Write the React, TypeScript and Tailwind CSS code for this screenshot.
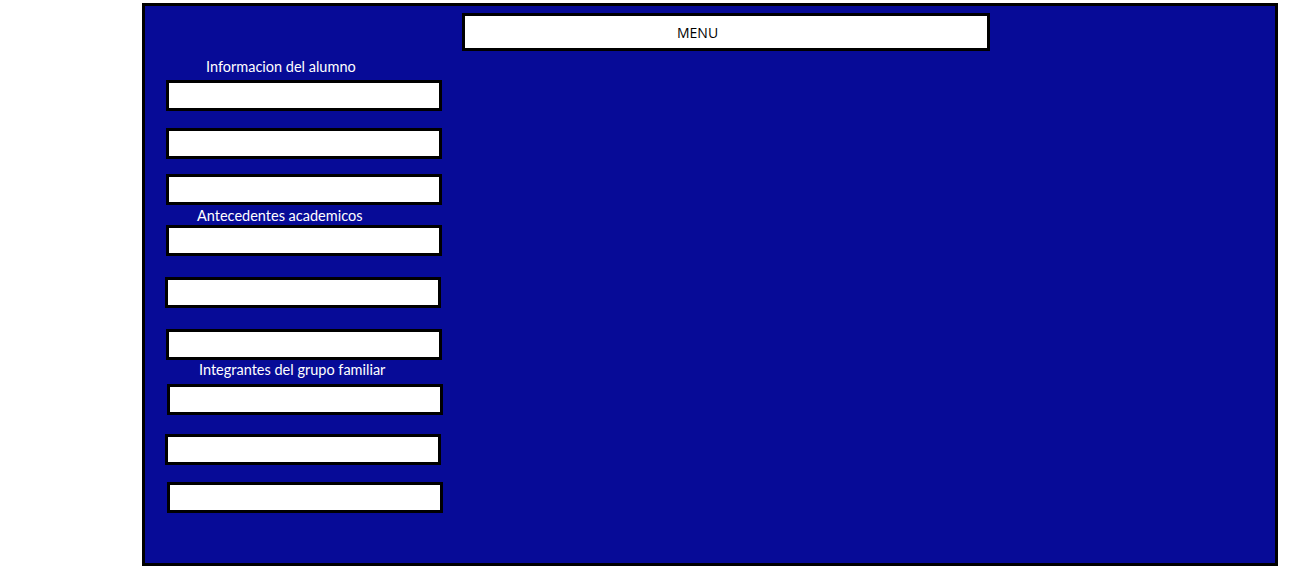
const fields: { label?: string; labelMl?: string; labelMt?: string; mt: string; ml: string }[] = [
	{ label: 'Informacion del alumno', labelMl: 'ml-[61px]', labelMt: 'mt-[8px]', mt: 'mt-[5px]', ml: 'ml-[21px]' },
	{ mt: 'mt-[17px]', ml: 'ml-[21px]' },
	{ mt: 'mt-[15px]', ml: 'ml-[21px]' },
	{ label: 'Antecedentes academicos', labelMl: 'ml-[52px]', labelMt: 'mt-[3px]', mt: 'mt-[1px]', ml: 'ml-[21px]' },
	{ mt: 'mt-[21px]', ml: 'ml-[20px]' },
	{ mt: 'mt-[21px]', ml: 'ml-[21px]' },
	{ label: 'Integrantes del grupo familiar', labelMl: 'ml-[54px]', labelMt: 'mt-[2px]', mt: 'mt-[6px]', ml: 'ml-[22px]' },
	{ mt: 'mt-[19px]', ml: 'ml-[20px]' },
	{ mt: 'mt-[17px]', ml: 'ml-[22px]' },
];

const App = () => {
	return (
		<div className="w-[1307px] h-[573px] bg-white overflow-hidden">
			<div className="ml-[142px] mt-[3px] w-[1136px] h-[563px] border-[3px] border-black bg-[#070b97] flex flex-col">
				<div
					className="ml-[317px] mt-[7px] w-[528px] h-[38px] border-[3px] border-black bg-white flex items-center pl-[212px] text-[14px] text-black"
					style={{ fontFamily: '"Open Sans", sans-serif' }}
				>
					MENU
				</div>
				{fields.map((f, i) => (
					<div key={i} className="flex flex-col">
						{f.label && (
							<span
								className={`${f.labelMl} ${f.labelMt} h-[16px] leading-[16px] text-[14.5px] text-white`}
								style={{ fontFamily: 'Lato, sans-serif' }}
							>
								{f.label}
							</span>
						)}
						<div className={`${f.ml} ${f.mt} w-[276px] h-[31px] border-[3px] border-black bg-white`} />
					</div>
				))}
			</div>
		</div>
	);
};

export default App;
